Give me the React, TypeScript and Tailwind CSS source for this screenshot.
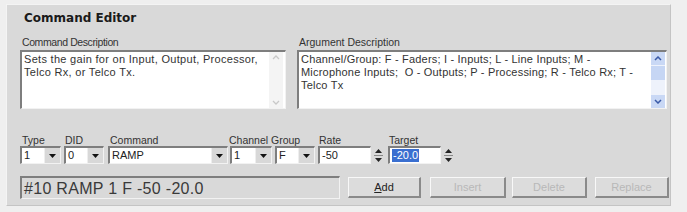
import React from 'react'

const font = { fontFamily: '"Liberation Sans", Arial, sans-serif' }

function Sunken({ className = '', children }: { className?: string; children?: React.ReactNode }) {
  return (
    <div className={`border-t-2 border-l-2 border-t-[#7e7e7e] border-l-[#7e7e7e] border-b border-r border-b-[#f2f2f2] border-r-[#f2f2f2] ${className}`}>
      {children}
    </div>
  )
}

function Combo({ value, width }: { value: string; width: string }) {
  return (
    <Sunken className={`${width} h-[18px] bg-white flex items-stretch`}>
      <div className="flex-1 pl-[2px] text-[11px] leading-[15px] text-[#222]">{value}</div>
      <div className="w-[16px] bg-[#d8d8d8] border-l border-[#eee] flex items-center justify-center">
        <svg width="7" height="4" viewBox="0 0 7 4"><path d="M0 0h7L3.5 4z" fill="#111" /></svg>
      </div>
    </Sunken>
  )
}

function Spin({ value, width, selected }: { value: string; width: string; selected?: boolean }) {
  return (
    <div className={`${width} h-[18px] flex items-stretch`}>
      <Sunken className="flex-1 bg-white flex items-center pl-[2px]">
        <span className={`text-[11px] leading-[13px] ${selected ? 'bg-[#3a6fd0] text-white px-[1px]' : 'text-[#222]'}`}>{value}</span>
      </Sunken>
      <div className="w-[14px] flex flex-col items-center justify-center gap-[2px]">
        <svg width="7" height="4" viewBox="0 0 7 4"><path d="M0 4h7L3.5 0z" fill="#222" /></svg>
        <div className="w-[9px] h-px bg-[#888]" />
        <svg width="7" height="4" viewBox="0 0 7 4"><path d="M0 0h7L3.5 4z" fill="#222" /></svg>
      </div>
    </div>
  )
}

function Btn({ label, disabled, width }: { label: React.ReactNode; disabled?: boolean; width: string }) {
  return (
    <div className={`${width} h-[21px] border-t border-l border-t-[#f8f8f8] border-l-[#f8f8f8] border-b-2 border-r-2 border-b-[#8a8a8a] border-r-[#8a8a8a] bg-[#dcdcdc] flex items-center justify-center text-[11px] ${disabled ? 'text-[#b8b8b8]' : 'text-[#222]'}`}>
      {label}
    </div>
  )
}

export default function App() {
  return (
    <div className="w-[687px] h-[212px] bg-[#efefef] pt-[4px] pl-[6px]" style={font}>
      <div className="w-[665px] h-[202px] bg-[#d9d9d9] border-l border-t border-[#f4f4f4] border-r border-b border-r-[#c4c4c4] border-b-[#c4c4c4] pl-[13px] pt-[5px]">
        <div className="pl-[4px] text-[12px] font-bold text-[#1a1a1a] leading-[16px]" style={{ fontFamily: '"DejaVu Sans", Verdana, sans-serif' }}>
          Command Editor
        </div>

        <div className="flex gap-[11px] mt-[10px]">
          <div className="w-[266px]">
            <div className="pl-[2px] text-[10.5px] leading-[13px] text-[#333] tracking-[-0.4px]">Command Description</div>
            <Sunken className="mt-[1px] h-[59px] bg-white flex">
              <div className="flex-1 pl-[2px] pt-[1px] text-[11px] leading-[13px] text-[#333] whitespace-nowrap tracking-[0.3px]">
                Sets the gain for on Input, Output, Processor,
                <br />
                Telco Rx, or Telco Tx.
              </div>
              <div className="w-[14px] mr-[2px] flex flex-col justify-between items-center py-[3px] bg-[#f4f4f4]">
                <svg width="8" height="5" viewBox="0 0 8 5"><path d="M1 4l3-3 3 3" stroke="#c8c8c8" fill="none" strokeWidth="1.3" /></svg>
                <svg width="8" height="5" viewBox="0 0 8 5"><path d="M1 1l3 3 3-3" stroke="#c8c8c8" fill="none" strokeWidth="1.3" /></svg>
              </div>
            </Sunken>
          </div>
          <div className="w-[370px]">
            <div className="pl-[2px] text-[10.5px] leading-[13px] text-[#333]">Argument Description</div>
            <Sunken className="mt-[1px] h-[59px] bg-white flex">
              <div className="flex-1 pl-[2px] pt-[1px] text-[11px] leading-[13px] text-[#333] whitespace-nowrap tracking-[0.2px]">
                Channel/Group: F - Faders; I - Inputs; L - Line Inputs; M -
                <br />
                Microphone Inputs;&nbsp; O - Outputs; P - Processing; R - Telco Rx; T -
                <br />
                Telco Tx
              </div>
              <div className="w-[14px] mr-[1px] flex flex-col bg-[#eef2fb]">
                <div className="h-[13px] bg-[#c9d8f5] flex items-center justify-center">
                  <svg width="8" height="5" viewBox="0 0 8 5"><path d="M1 4l3-3 3 3" stroke="#3a5aa8" fill="none" strokeWidth="1.5" /></svg>
                </div>
                <div className="h-[14px] bg-[#c6d6f4] mt-[1px]" />
                <div className="flex-1" />
                <div className="h-[13px] bg-[#c9d8f5] flex items-center justify-center">
                  <svg width="8" height="5" viewBox="0 0 8 5"><path d="M1 1l3 3 3-3" stroke="#3a5aa8" fill="none" strokeWidth="1.5" /></svg>
                </div>
              </div>
            </Sunken>
          </div>
        </div>

        <div className="flex mt-[25px] text-[10.5px] text-[#333]">
          <div className="w-[44px]">
            <div className="pl-[2px] leading-[12px]">Type</div>
            <Combo value="1" width="w-[41px]" />
          </div>
          <div className="w-[44px]">
            <div className="pl-[1px] leading-[12px]">DID</div>
            <Combo value="0" width="w-[40px]" />
          </div>
          <div className="w-[122px]">
            <div className="pl-[2px] leading-[12px]">Command</div>
            <Combo value="RAMP" width="w-[120px]" />
          </div>
          <div className="w-[45px]">
            <div className="leading-[12px] whitespace-nowrap -ml-[1px]">Channel</div>
            <Combo value="1" width="w-[42px]" />
          </div>
          <div className="w-[43px]">
            <div className="leading-[12px] -ml-[4px]">Group</div>
            <Combo value="F" width="w-[40px]" />
          </div>
          <div className="w-[70px]">
            <div className="leading-[12px] pl-[1px]">Rate</div>
            <Spin value="-50" width="w-[67px]" />
          </div>
          <div className="w-[68px]">
            <div className="leading-[12px] pl-[1px]">Target</div>
            <Spin value="-20.0" width="w-[67px]" selected />
          </div>
        </div>

        <div className="flex items-center mt-[12px]">
          <Sunken className="w-[320px] h-[23px] bg-[#d9d9d9] flex items-center pl-[2px]">
            <span className="text-[16px] text-[#3a3a3a] leading-[17px] tracking-[0.3px]">#10 RAMP 1 F -50 -20.0</span>
          </Sunken>
          <div className="ml-[8px]">
            <Btn width="w-[73px]" label={<span><span className="underline">A</span>dd</span>} />
          </div>
          <div className="ml-[9px]">
            <Btn width="w-[76px]" label="Insert" disabled />
          </div>
          <div className="ml-[6px]">
            <Btn width="w-[75px]" label="Delete" disabled />
          </div>
          <div className="ml-[8px]">
            <Btn width="w-[74px]" label="Replace" disabled />
          </div>
        </div>
      </div>
    </div>
  )
}
